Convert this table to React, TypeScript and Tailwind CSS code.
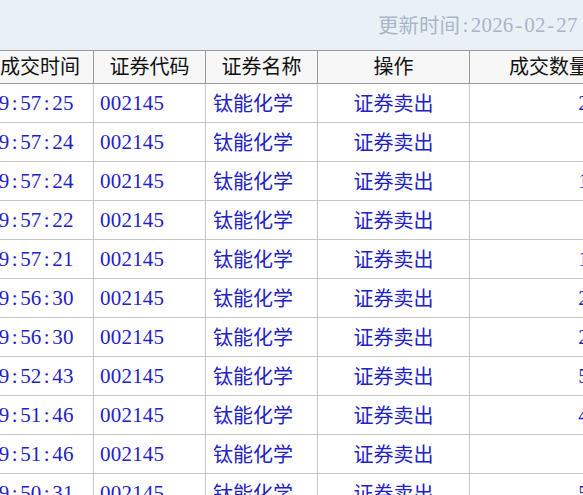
import React from "react";

function Mono({ text }: { text: string }) {
  return (
    <span className="inline-flex whitespace-nowrap">
      {text.split("").map((c, i) => (
        <span key={i} className="inline-block w-[10.7px] text-center">
          {c === " " ? "\u00a0" : c}
        </span>
      ))}
    </span>
  );
}

const rows: [string, string][] = [
  ["09:57:25", "2000"],
  ["09:57:24", "500"],
  ["09:57:24", "1000"],
  ["09:57:22", "300"],
  ["09:57:21", "1200"],
  ["09:56:30", "2000"],
  ["09:56:30", "2100"],
  ["09:52:43", "5000"],
  ["09:51:46", "4000"],
  ["09:51:46", "600"],
  ["09:50:31", "5000"],
];

export default function App() {
  return (
    <div className="w-[583px] h-[495px] overflow-hidden bg-white font-['Liberation_Serif','Noto_Sans_CJK_SC',serif]">
      <div className="h-[50px] bg-[#e9f1f6] flex items-center pl-[378px] pt-[2px] whitespace-nowrap text-[#a9b5c6] text-[20.5px]">
        <span>更新时间</span>
        <span className="text-[21px]">
          <Mono text=":2026-02-27 10:00:00" />
        </span>
      </div>
      <div className="-ml-[19px] w-[700px]">
        <div className="flex h-[34px] border-y border-[#9a9a9a] bg-[#f7f7f7] text-[#111] text-[20px]">
          <div className="w-[113px] shrink-0 border-r border-[#9a9a9a] flex items-center justify-center pl-[6px]">成交时间</div>
          <div className="w-[112px] shrink-0 border-r border-[#9a9a9a] flex items-center justify-center">证券代码</div>
          <div className="w-[112px] shrink-0 border-r border-[#9a9a9a] flex items-center justify-center">证券名称</div>
          <div className="w-[152px] shrink-0 border-r border-[#9a9a9a] flex items-center justify-center">操作</div>
          <div className="w-[159px] shrink-0 border-r border-[#9a9a9a] flex items-center justify-center">成交数量</div>
          <div className="flex-1" />
        </div>
        {rows.map(([t, q], i) => (
          <div key={i} className="flex h-[39px] border-b border-[#c6c6c6] text-[#2222c4]">
            <div className="w-[113px] shrink-0 border-r border-[#c6c6c6] flex items-center pl-[7px] pt-[2px] text-[21px]">
              <Mono text={t} />
            </div>
            <div className="w-[112px] shrink-0 border-r border-[#c6c6c6] flex items-center pl-[6px] pt-[2px] text-[21px]">
              <Mono text="002145" />
            </div>
            <div className="w-[112px] shrink-0 border-r border-[#c6c6c6] flex items-center pl-[7px] pt-[2px] text-[20px]">
              钛能化学
            </div>
            <div className="w-[152px] shrink-0 border-r border-[#c6c6c6] flex items-center justify-center pt-[2px] text-[20px]">
              证券卖出
            </div>
            <div className="w-[159px] shrink-0 border-r border-[#c6c6c6] flex items-center justify-end pr-[7px] pt-[2px] text-[21px]">
              <Mono text={q} />
            </div>
            <div className="flex-1" />
          </div>
        ))}
      </div>
    </div>
  );
}
